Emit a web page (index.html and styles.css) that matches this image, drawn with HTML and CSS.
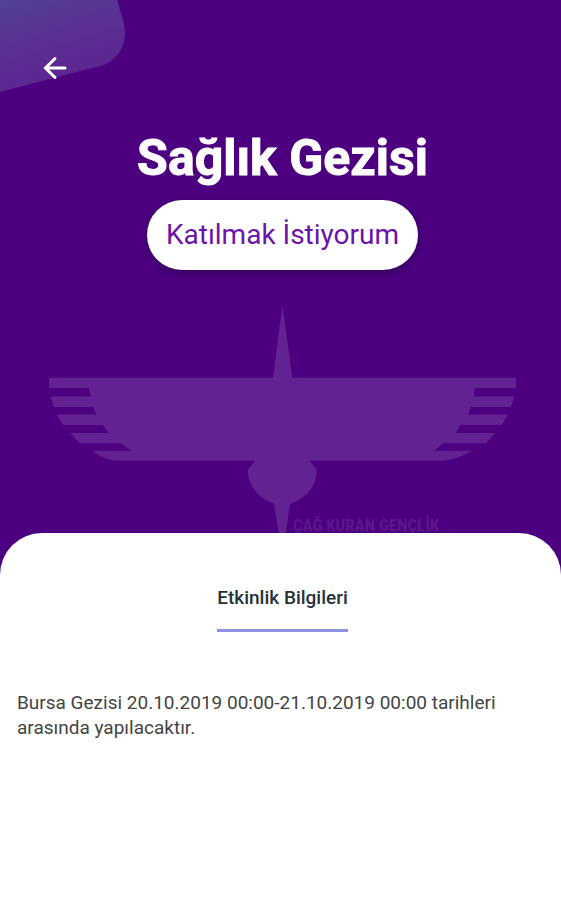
FILE: index.html
```html
<!DOCTYPE html>
<html lang="tr">
<head>
<meta charset="utf-8">
<meta name="viewport" content="width=device-width, initial-scale=1">
<title>Sağlık Gezisi</title>
<link rel="stylesheet" href="styles.css">
</head>
<body>
<header class="hero">
  <svg class="corner" viewBox="0 0 128 94" aria-hidden="true">
    <defs>
      <linearGradient id="corner-fill" gradientUnits="userSpaceOnUse" x1="10" y1="-12" x2="40" y2="84">
        <stop offset="0" stop-color="#4f4597"/>
        <stop offset="0.55" stop-color="#5a3193"/>
        <stop offset="1" stop-color="#5c2691"/>
      </linearGradient>
    </defs>
    <path fill="url(#corner-fill)" d="M0 0H117.500C119 10 125 20 125 33C125 47 118 58 106 64Q103 65.500 88 69L0 92Z"/>
  </svg>
  <button class="back" type="button" aria-label="Geri">
    <svg viewBox="0 0 34 34" aria-hidden="true"><path d="M27 17H8.500M17 7.500L7.500 17L17 26.500"/></svg>
  </button>
  <h1 class="title">Sağlık Gezisi</h1>
  <button class="join" type="button">Katılmak İstiyorum</button>
  <svg class="emblem" viewBox="0 0 470 230" role="img" aria-label="Çağ Kuran Gençlik">
    <path d="M234.500 0L244.500 73H469.500V83.500H427.500L427 92H467.500L464 102.500H424L421 110H461L455 120.500H413L409 128.500H448L439 139H396L387 146.500H425Q410 156 393 156.500H261.500L269 165Q269 190 242 200L238 229H231L226 200Q200 189 199.500 166L207 156.500H70Q54 156 44 146.500H83L72 139H31L21 128.500H60L54 120.500H14L8 110H47.500L44 102.500H5L1.500 92H42L40 83.500H0V73H225Z"/>
    <text x="245" y="227">ÇAĞ KURAN GENÇLİK</text>
  </svg>
</header>
<main class="sheet">
  <nav class="tabs"><a class="tab" href="#details" aria-current="page">Etkinlik Bilgileri</a></nav>
  <p class="details" id="details">Bursa Gezisi 20.10.2019 00:00-21.10.2019 00:00 tarihleri arasında yapılacaktır.</p>
</main>
</body>
</html>
```
FILE: styles.css
```css
* {
  box-sizing: border-box;
}

body {
  display: flex;
  flex-direction: column;
  min-height: 100vh;
  margin: 0;
  background: #4c0080;
  font-family: Roboto, "Liberation Sans", sans-serif;
}

.hero {
  position: relative;
  display: flex;
  flex-direction: column;
  align-items: center;
  padding: 48px 0 0 4px;
}

.corner {
  position: absolute;
  top: 0;
  left: 0;
  width: 128px;
  height: 94px;
}

.back {
  position: relative;
  align-self: flex-start;
  width: 40px;
  height: 40px;
  margin-left: 31px;
  padding: 3px;
  border: 0;
  background: none;
  cursor: pointer;
}

.back svg {
  display: block;
  width: 34px;
  height: 34px;
  fill: none;
  stroke: #fff;
  stroke-width: 3;
  stroke-linecap: round;
}

.title {
  margin: 40px 0 12px;
  color: #fff;
  font-size: 50px;
  font-weight: 700;
  line-height: 60px;
  -webkit-text-stroke: 1px #fff;
}

.join {
  height: 70px;
  padding: 0 19px;
  border: 0;
  border-radius: 35px;
  background: #fff;
  box-shadow: 0 3px 8px rgba(0, 0, 0, 0.3);
  color: #6c14a8;
  font: 400 28px/36px Roboto, "Liberation Sans", sans-serif;
  cursor: pointer;
}

.emblem {
  display: block;
  width: 84%;
  margin-top: 35px;
  fill: #622292;
}

.emblem text {
  font-family: "Roboto Condensed", Roboto, "Liberation Sans", sans-serif;
  font-size: 17px;
  font-weight: 700;
  fill: #5a178b;
}

.sheet {
  flex: 1;
  margin-top: -1px;
  padding: 49px 17px;
  border-radius: 42px 42px 0 0;
  background: #fff;
  position: relative;
}

.tabs {
  display: flex;
  justify-content: center;
  padding-left: 4px;
}

.tab {
  padding-bottom: 15px;
  border-bottom: 3px solid #8f92e2;
  color: #263238;
  font-size: 19px;
  font-weight: 500;
  line-height: 32px;
  text-decoration: none;
}

.details {
  margin: 58px 0 0;
  color: #444;
  font-size: 19px;
  line-height: 25px;
}
```
